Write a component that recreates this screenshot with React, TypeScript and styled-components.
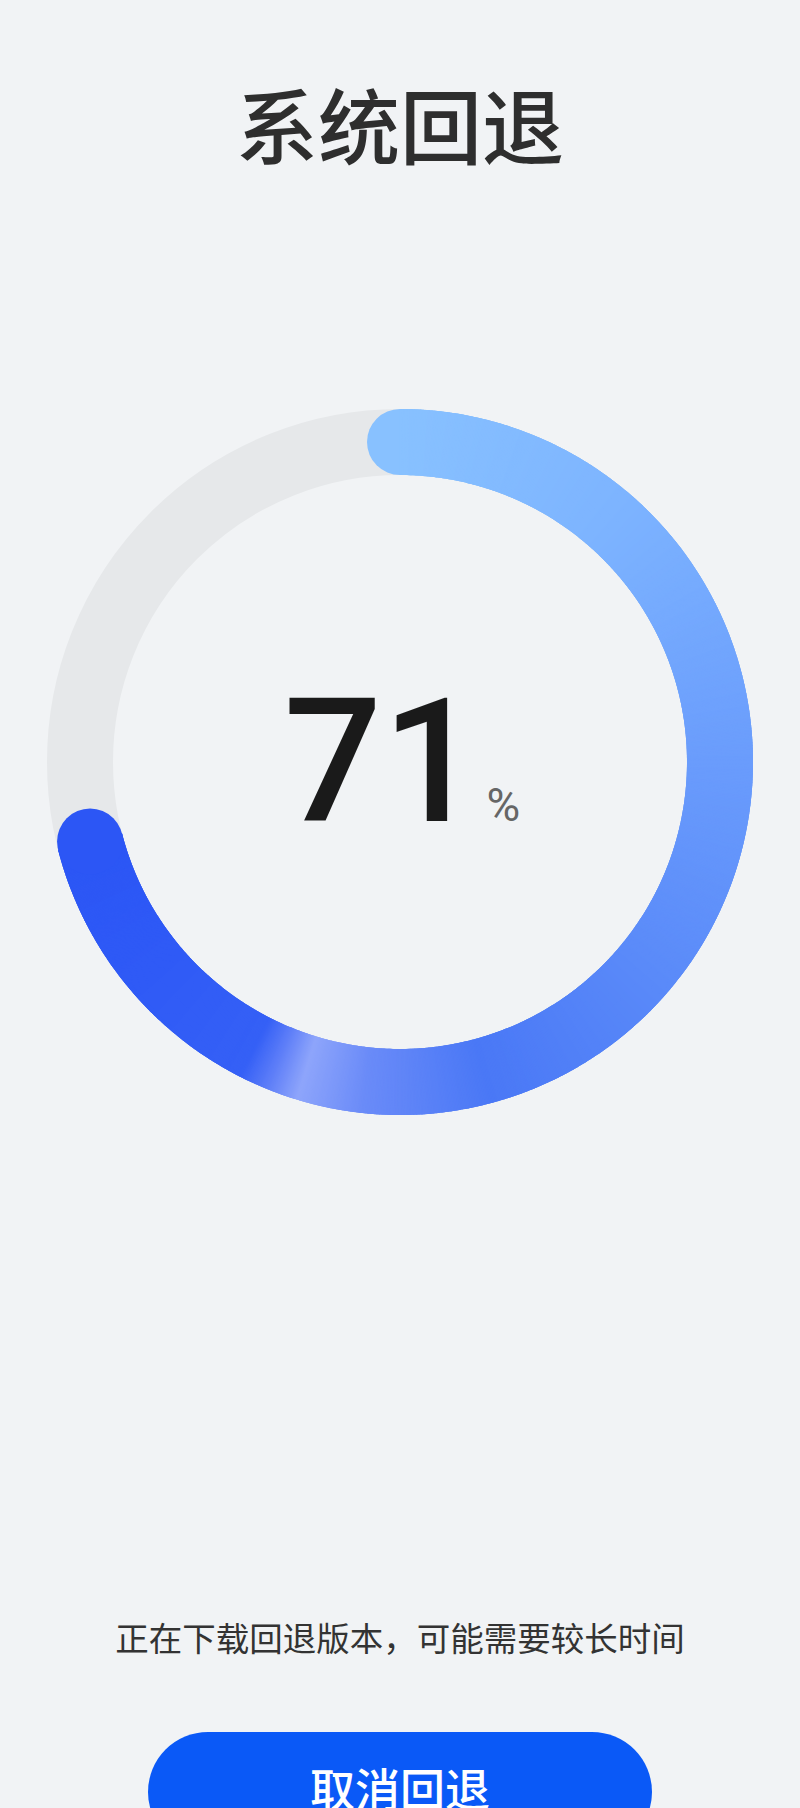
import React from 'react'
import styled, { createGlobalStyle } from 'styled-components'

const GlobalStyle = createGlobalStyle`
  html, body {
    margin: 0;
    padding: 0;
    background: #f1f3f5;
  }
  * {
    box-sizing: border-box;
  }
`

const CJK = `"Noto Sans CJK SC", "Noto Sans", sans-serif`

// ring geometry
const SIZE = 706
const C = SIZE / 2
const R = 320
const STROKE = 66

// colour stops along the progress arc, degrees clockwise from 12 o'clock
const STOPS: [number, string][] = [
  [0, '#88c1ff'],
  [40, '#7db4ff'],
  [90, '#6a9cfc'],
  [130, '#5a8af9'],
  [165, '#4a78f6'],
  [186, '#6a8bf8'],
  [197, '#8ea5fb'],
  [202, '#5f7ff8'],
  [207, '#3560f6'],
  [230, '#2f5af6'],
  [260, '#2b55f5'],
]

const hexToRgb = (hex: string) => {
  const n = parseInt(hex.slice(1), 16)
  return [(n >> 16) & 255, (n >> 8) & 255, n & 255]
}

const colorAt = (deg: number) => {
  for (let i = 0; i < STOPS.length - 1; i++) {
    const [a, ca] = STOPS[i]
    const [b, cb] = STOPS[i + 1]
    if (deg >= a && deg <= b) {
      const t = (deg - a) / (b - a)
      const x = hexToRgb(ca)
      const y = hexToRgb(cb)
      const m = x.map((v, k) => Math.round(v + (y[k] - v) * t))
      return `rgb(${m[0]}, ${m[1]}, ${m[2]})`
    }
  }
  return STOPS[STOPS.length - 1][1]
}

const point = (deg: number) => {
  const rad = (deg * Math.PI) / 180
  return [C + R * Math.sin(rad), C - R * Math.cos(rad)]
}

const arcPath = (from: number, to: number) => {
  const [x0, y0] = point(from)
  const [x1, y1] = point(to)
  const large = to - from > 180 ? 1 : 0
  return `M ${x0.toFixed(2)} ${y0.toFixed(2)} A ${R} ${R} 0 ${large} 1 ${x1.toFixed(2)} ${y1.toFixed(2)}`
}

const ProgressRing = ({ value }: { value: number }) => {
  const end = (value / 100) * 360
  const segs = []
  const step = 0.25
  for (let a = 0; a < end; a += step) {
    const b = Math.min(a + step + 0.4, end)
    segs.push(
      <path
        key={a}
        d={arcPath(a, b)}
        stroke={colorAt(a + step / 2)}
        strokeWidth={STROKE}
        fill="none"
      />
    )
  }
  const [sx, sy] = point(0)
  const [ex, ey] = point(end)
  return (
    <svg width={SIZE} height={SIZE} viewBox={`0 0 ${SIZE} ${SIZE}`}>
      <circle cx={C} cy={C} r={R} stroke="#e6e8ea" strokeWidth={STROKE} fill="none" />
      <circle cx={sx} cy={sy} r={STROKE / 2} fill={colorAt(0)} />
      {segs}
      <circle cx={ex} cy={ey} r={STROKE / 2} fill={colorAt(end)} />
    </svg>
  )
}

const App = () => {
  const progress = 71
  return (
    <>
      <GlobalStyle />
      <Page>
        <Title>系统回退</Title>
        <RingWrap>
          <ProgressRing value={progress} />
          <Readout>
            <Value>{progress}</Value>
            <Unit>%</Unit>
          </Readout>
        </RingWrap>
        <Hint>正在下载回退版本，可能需要较长时间</Hint>
        <CancelButton>取消回退</CancelButton>
      </Page>
    </>
  )
}

export default App

const Page = styled.main`
  height: 1808px;
  overflow: hidden;
  display: flex;
  flex-direction: column;
  align-items: center;
  background: #f1f3f5;
`

const Title = styled.h1`
  margin: 82px 0 0;
  font-family: ${CJK};
  font-size: 82px;
  font-weight: 500;
  line-height: 1;
  color: #2e2e2e;
`

const RingWrap = styled.div`
  margin-top: 245px;
  display: grid;
  place-items: center;
  & > * {
    grid-area: 1 / 1;
  }
`

const Readout = styled.div`
  display: flex;
  align-items: baseline;
  line-height: 1;
  padding-left: 4px;
`

const Value = styled.span`
  font-family: Roboto, "Liberation Sans", sans-serif;
  font-size: 173px;
  font-weight: 500;
  color: #1a1a1a;
`

const Unit = styled.span`
  margin-left: 6px;
  font-family: Roboto, "Liberation Sans", sans-serif;
  font-size: 46px;
  font-weight: 400;
  color: #666;
`

const Hint = styled.p`
  margin: 505px 0 0;
  font-family: ${CJK};
  font-size: 33.5px;
  line-height: 1;
  color: #333;
`

const CancelButton = styled.button`
  margin-top: 78px;
  flex-shrink: 0;
  width: 504px;
  height: 120px;
  border: none;
  border-radius: 60px;
  background: #0a59f7;
  color: #fff;
  font-family: ${CJK};
  font-size: 45px;
  font-weight: 500;
  line-height: 1;
  padding: 0 0 8px;
`
